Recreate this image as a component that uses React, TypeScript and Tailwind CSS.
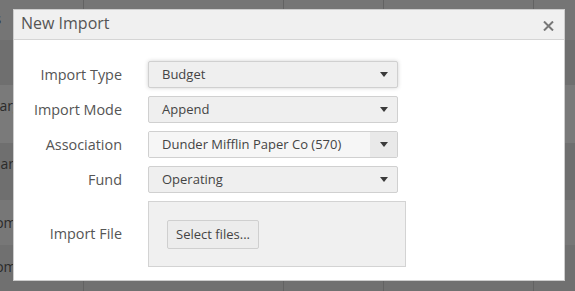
const font = { fontFamily: '"Open Sans", "Liberation Sans", sans-serif' };

const bgRows = [
  { h: "h-[40px]", bg: "bg-[#757575]", text: "Totals", shift: "-ml-[38px]", y: "pt-[8px]" },
  { h: "h-[45px]", bg: "bg-[#6f6f6f]", text: "", shift: "", y: "" },
  { h: "h-[58px]", bg: "bg-[#7a7a7a]", text: "Charges", shift: "-ml-[18px]", y: "pt-[10px]" },
  { h: "h-[57px]", bg: "bg-[#6f6f6f]", text: "Charges", shift: "-ml-[17px]", y: "pt-[10px]" },
  { h: "h-[45px]", bg: "bg-[#777777]", text: "Income", shift: "-ml-[24px]", y: "pt-[12px]" },
  { h: "h-[46px]", bg: "bg-[#707070]", text: "Income", shift: "-ml-[24px]", y: "pt-[11px]" },
];

function Arrow() {
  return (
    <svg width="8" height="5" viewBox="0 0 8 5" className="shrink-0">
      <path d="M0 0 H8 L4 5 Z" fill="#3a3a3a" />
    </svg>
  );
}

function Select({ value, shadow }: { value: string; shadow?: boolean }) {
  return (
    <div
      className={
        "flex h-[27px] w-[250px] items-center justify-between rounded-[2px] border border-[#d0d0d0] bg-[#efefef] pl-[13px] pr-[9px] text-[13px] text-[#444] " +
        (shadow ? "shadow-[0_0_4px_rgba(0,0,0,0.18)]" : "")
      }
    >
      <span>{value}</span>
      <Arrow />
    </div>
  );
}

function ComboBox({ value }: { value: string }) {
  return (
    <div className="flex h-[27px] w-[250px] overflow-hidden rounded-[2px] border border-[#d0d0d0] text-[13px] text-[#444]">
      <div className="flex flex-1 items-center bg-[#f6f6f6] pl-[13px]">{value}</div>
      <div className="flex w-[27px] items-center justify-center bg-[#e9e9e9] pl-[1px]">
        <Arrow />
      </div>
    </div>
  );
}

export default function App() {
  return (
    <div className="relative h-[291px] w-[575px] overflow-hidden bg-[#737373]" style={font}>
      {/* dimmed table behind the dialog */}
      <div className="flex flex-col">
        {bgRows.map((row, i) => (
          <div key={i} className={"grid grid-cols-[84px_200px_100px_150px_1fr] " + row.h + " " + row.bg}>
            <div className={"overflow-hidden whitespace-nowrap border-r border-[#626262] text-[14px] text-[#2b2b2b] " + row.y}>
              <span className={"inline-block " + row.shift}>{row.text}</span>
            </div>
            <div className="border-r border-[#626262]" />
            <div className="border-r border-[#626262]" />
            <div className="border-r border-[#626262]" />
            <div />
          </div>
        ))}
      </div>

      {/* dialog */}
      <div className="absolute left-[13px] top-[9px] flex h-[272px] w-[552px] flex-col border border-[#cdcdcd] bg-white">
        <div className="flex h-[30px] shrink-0 items-start justify-between border-b border-[#d5d5d5] bg-[#f0f0f0] pl-[7px] pr-[10px]">
          <span className="pt-[2px] text-[16px] leading-[22px] text-[#555]">New Import</span>
          <svg width="11" height="10" viewBox="0 0 11 10" className="mt-[11px]">
            <path d="M1 0.5 L10 9.5 M10 0.5 L1 9.5" stroke="#777" strokeWidth="2" />
          </svg>
        </div>

        <div className="grid grid-cols-[108px_auto] items-center gap-x-[26px] gap-y-[8px] pt-[21px] text-[14.4px]">
          <label className="text-right text-[#555]">Import Type</label>
          <Select value="Budget" shadow />

          <label className="text-right text-[#555]">Import Mode</label>
          <Select value="Append" />

          <label className="text-right text-[#555]">Association</label>
          <ComboBox value="Dunder Mifflin Paper Co (570)" />

          <label className="text-right text-[#555]">Fund</label>
          <Select value="Operating" />

          <label className="text-right text-[#555]">Import File</label>
          <div className="h-[66px] w-[258px] border border-[#d3d3d3] bg-[#f0f0f0] pl-[18px] pt-[18px]">
            <button className="flex h-[29px] w-[92px] items-center justify-center rounded-[2px] border border-[#cfcfcf] bg-[#ececec] text-[13px] text-[#444]">
              Select files...
            </button>
          </div>
        </div>
      </div>
    </div>
  );
}
